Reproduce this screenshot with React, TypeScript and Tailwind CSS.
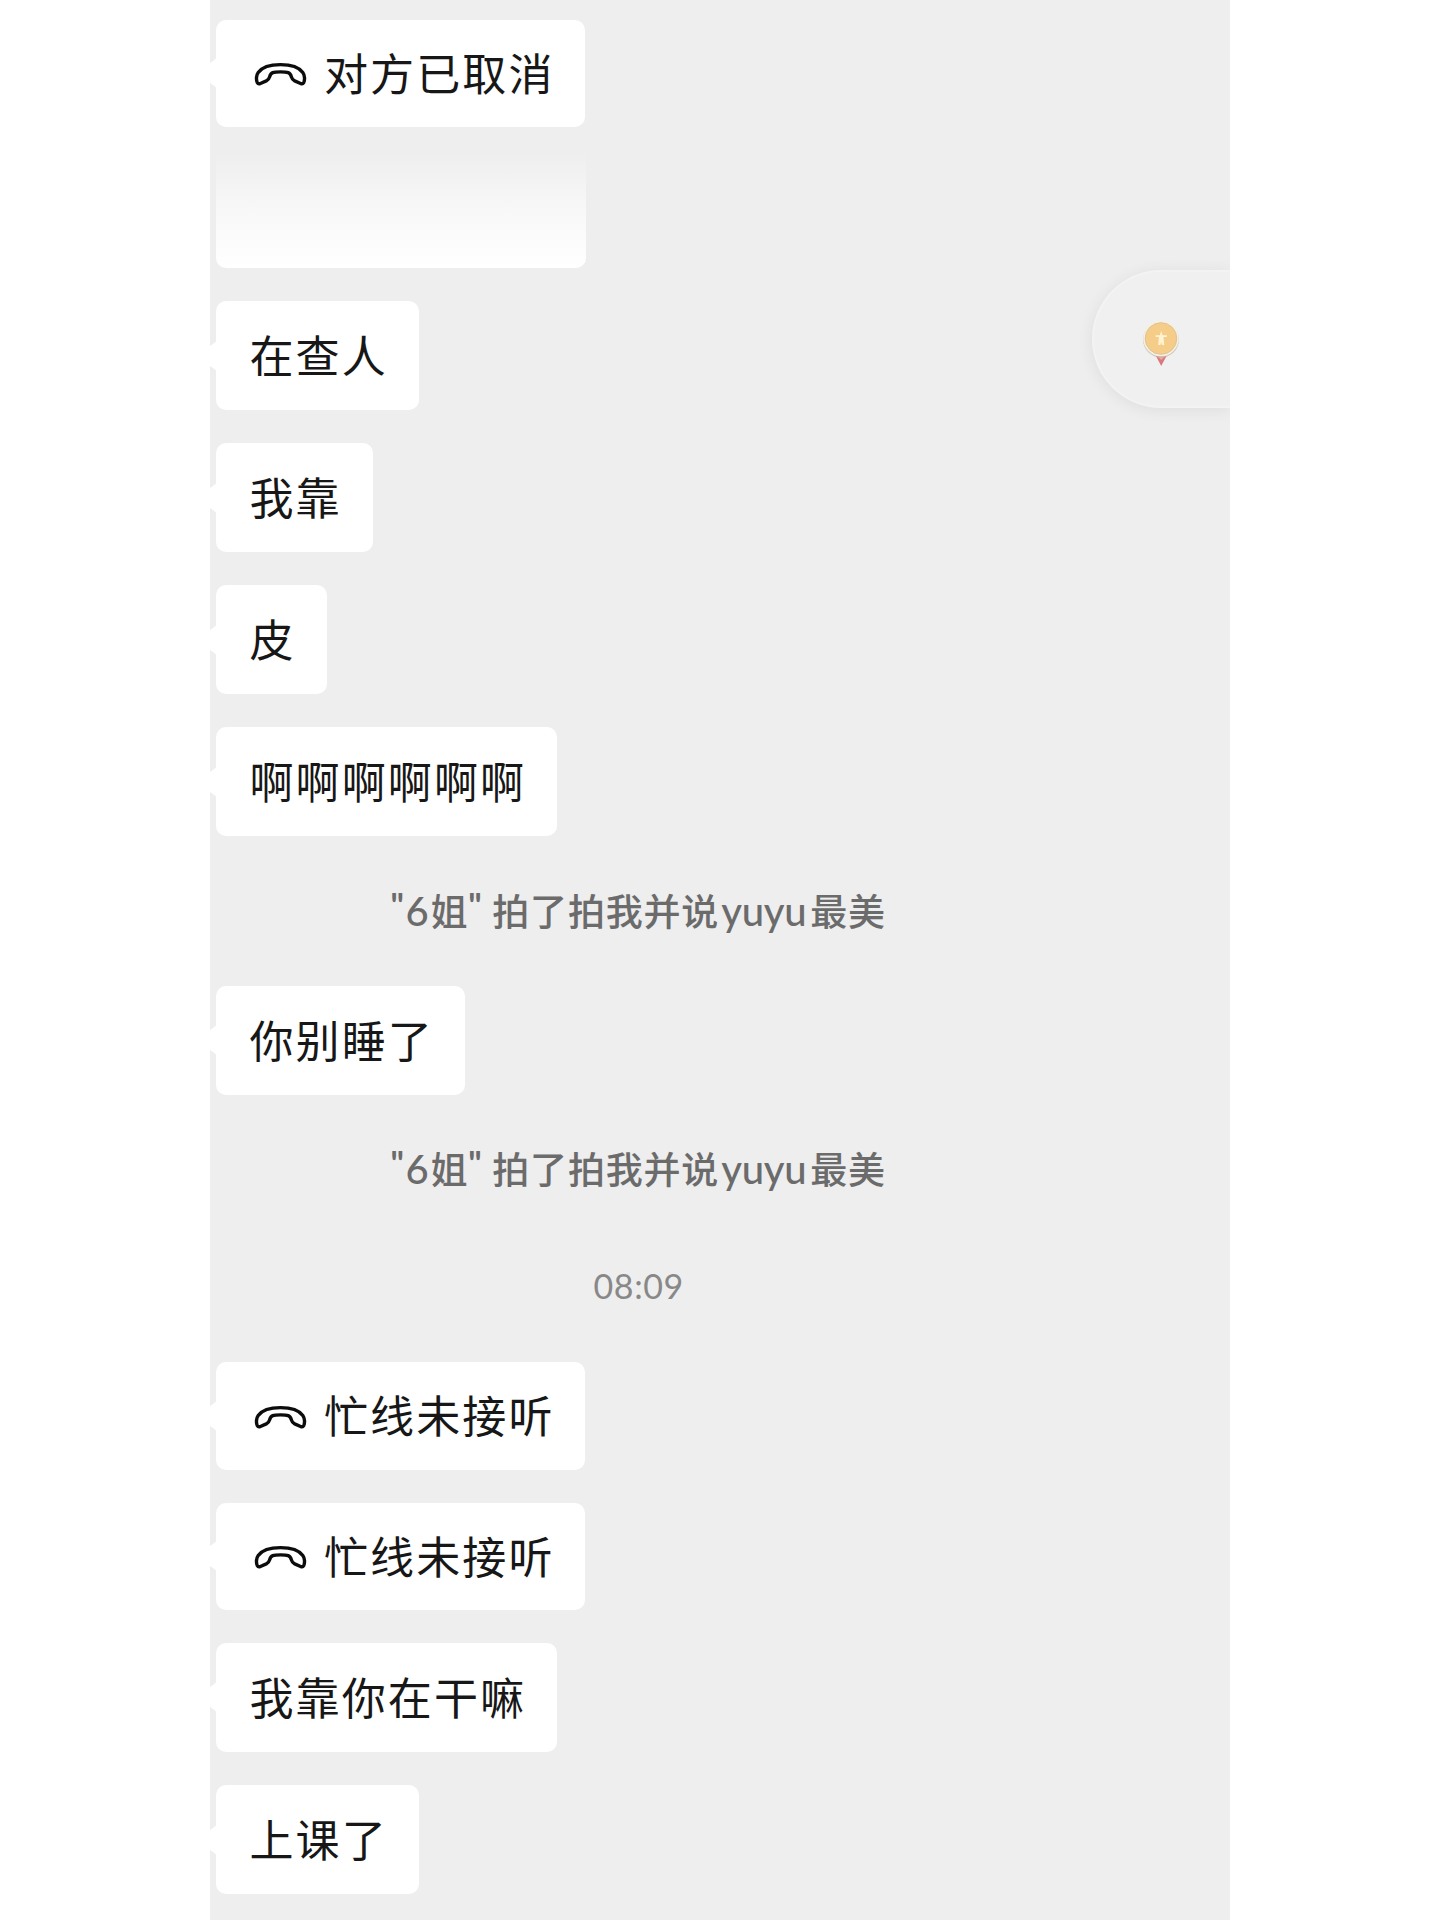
import React from 'react';
import clsx from 'clsx';

interface Message {
  id: number;
  type: 'text' | 'call' | 'faded' | 'pat' | 'time';
  text?: string;
  spacing: string;
}

const MESSAGES: Message[] = [
  { id: 1, type: 'call', text: '对方已取消', spacing: 'mt-[19.5px]' },
  { id: 2, type: 'faded', spacing: 'mt-[25px]' },
  { id: 3, type: 'text', text: '在查人', spacing: 'mt-[33.5px]' },
  { id: 4, type: 'text', text: '我靠', spacing: 'mt-[33px]' },
  { id: 5, type: 'text', text: '皮', spacing: 'mt-[33px]' },
  { id: 6, type: 'text', text: '啊啊啊啊啊啊', spacing: 'mt-[33px]' },
  { id: 7, type: 'pat', spacing: 'mt-[53px]' },
  { id: 8, type: 'text', text: '你别睡了', spacing: 'mt-[48.5px]' },
  { id: 9, type: 'pat', spacing: 'mt-[52.5px]' },
  { id: 10, type: 'time', text: '08:09', spacing: 'mt-[70px]' },
  { id: 11, type: 'call', text: '忙线未接听', spacing: 'mt-[53px]' },
  { id: 12, type: 'call', text: '忙线未接听', spacing: 'mt-[33px]' },
  { id: 13, type: 'text', text: '我靠你在干嘛', spacing: 'mt-[32.5px]' },
  { id: 14, type: 'text', text: '上课了', spacing: 'mt-[33.5px]' }
];

const HandsetIcon: React.FC = () => (
  <svg className="w-[53px] h-[24px] mt-[2px] shrink-0" viewBox="0 0 53 24" fill="none" stroke="#0c0c0c" strokeWidth="3.4" strokeLinejoin="round">
    <path d="M26.5 2.6C16 2.6 7.6 5.8 4.2 10.4C2.1 13.2 2.1 18 3.2 20.4C3.9 21.8 5.2 22.1 6.4 21.5L12.3 18.9C14.4 17.9 15.1 16.8 15.6 14.9C16.2 12.5 17 11.3 18.8 10.6C21.5 9.6 31.5 9.6 34.2 10.6C36 11.3 36.8 12.5 37.4 14.9C37.9 16.8 38.6 17.9 40.7 18.9L46.6 21.5C47.8 22.1 49.1 21.8 49.8 20.4C50.9 18 50.9 13.2 48.8 10.4C45.4 5.8 37 2.6 26.5 2.6Z" />
  </svg>
);

const BubbleTail: React.FC = () => (
  <svg className="absolute -left-[6px] top-1/2 -mt-[16px] w-[7px] h-[32px]" viewBox="0 0 7 32">
    <path d="M7 0C6 2 3 4 0 6V26C3 28 6 30 7 32Z" fill="#fff" />
  </svg>
);

interface BubbleProps {
  text?: string;
  call?: boolean;
}

const Bubble: React.FC<BubbleProps> = ({ text, call = false }) => (
  <div
    className={clsx(
      'relative flex items-center bg-white rounded-[10px] text-[44px] leading-none tracking-[2.1px] text-[#171717] whitespace-nowrap',
      call ? 'h-[107.5px] pl-[38px] pr-[30px]' : 'h-[109px] pl-[33.5px] pr-[31px]'
    )}
  >
    <BubbleTail />
    {call && <HandsetIcon />}
    <span className={clsx('block pb-[3px]', call && 'ml-[17px]')}>{text}</span>
  </div>
);

const PatNotice: React.FC = () => (
  <div className="flex h-[48px] pb-[6px] items-baseline text-[37px] leading-[42px] font-medium tracking-[0.8px] text-[#6b6b6b] whitespace-pre">
    <span className="w-[15px] mb-[5px] self-end font-['Lato',sans-serif] text-[34px] font-bold tracking-[-1px]">"</span>
    <span className="w-[25px] font-['Lato',sans-serif] text-[40px]">6</span>
    <span>姐</span>
    <span className="w-[24px] mb-[5px] self-end font-['Lato',sans-serif] text-[34px] font-bold tracking-[-1px]">"</span>
    <span>拍了拍我并说</span>
    <span className="w-[91px] pl-[2px] font-['Lato',sans-serif] text-[40px] tracking-[-0.2px]">yuyu</span>
    <span>最美</span>
  </div>
);

const FloatingPill: React.FC = () => (
  <div className="absolute right-0 top-[269.5px] w-[138px] h-[138.5px] rounded-l-full bg-[#f0f0f0] border-2 border-r-0 border-[#f3f3f3] shadow-[0_2px_16px_rgba(0,0,0,0.07)]">
    <svg className="absolute left-[45px] top-[45px] w-[44px] h-[54px]" viewBox="0 0 44 54">
      <path d="M17 39H27.5L22.2 49Z" fill="#d9797c" />
      <path d="M18 39H26.5L22.2 43Z" fill="#eda7a9" />
      <circle cx="22" cy="22.6" r="18" fill="#bdb4a8" opacity=".65" />
      <circle cx="22" cy="21.5" r="17.8" fill="#f8f0df" />
      <circle cx="22" cy="21.5" r="15.8" fill="#f5cd89" stroke="#d9c49c" strokeWidth="1" />
      <path d="M22.2 14L23.6 18.2H27.8V20H24.5L25.2 28H23L22.2 25L21.4 28H19.2L19.9 20H16.6V18.2H20.8Z" fill="#fff3d2" />
    </svg>
  </div>
);

const MessageRow: React.FC<{ message: Message }> = ({ message }) => {
  switch (message.type) {
    case 'pat':
      return <PatNotice />;
    case 'time':
      return (
        <span className="block h-[44px] text-[34px] leading-[42px] tracking-[0.6px] text-[#888888] font-['Lato',sans-serif]">
          {message.text}
        </span>
      );
    case 'faded':
      return <div className="w-[369.5px] h-[115.5px] rounded-b-[10px] bg-linear-to-b from-[#eeeeee] via-[#f8f8f8] to-white" />;
    default:
      return <Bubble text={message.text} call={message.type === 'call'} />;
  }
};

const App: React.FC = () => {
  return (
    <div className="w-[1440px] h-[1920px] bg-white flex justify-center overflow-hidden font-['Noto_Sans_CJK_SC',sans-serif]">
      <main className="relative w-[1020px] h-full bg-[#eeeeee] flex flex-col overflow-hidden">
        {MESSAGES.map((message) => (
          <div
            key={message.id}
            className={clsx(
              'flex shrink-0',
              message.spacing,
              message.type === 'pat' && 'pl-[180.5px]',
              message.type === 'time' && 'pl-[383.5px]',
              !['pat', 'time'].includes(message.type) && 'pl-[6px]'
            )}
          >
            <MessageRow message={message} />
          </div>
        ))}
        <FloatingPill />
      </main>
    </div>
  );
};

export default App;
